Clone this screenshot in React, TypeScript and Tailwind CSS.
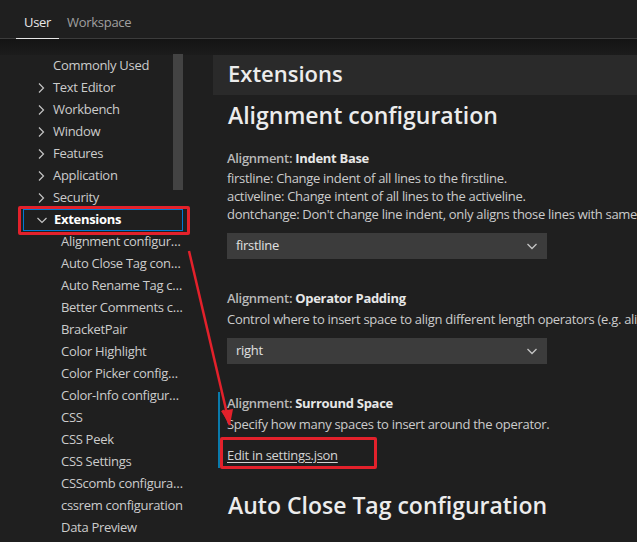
import React from 'react';

const topLevel = [
  { label: 'Commonly Used', chevron: false },
  { label: 'Text Editor', chevron: true },
  { label: 'Workbench', chevron: true },
  { label: 'Window', chevron: true },
  { label: 'Features', chevron: true },
  { label: 'Application', chevron: true },
  { label: 'Security', chevron: true },
];

const extensionItems = [
  'Alignment configur…',
  'Auto Close Tag con…',
  'Auto Rename Tag c…',
  'Better Comments c…',
  'BracketPair',
  'Color Highlight',
  'Color Picker config…',
  'Color-Info configur…',
  'CSS',
  'CSS Peek',
  'CSS Settings',
  'CSScomb configura…',
  'cssrem configuration',
  'Data Preview',
];

function Chevron({ down = false }: { down?: boolean }) {
  return (
    <svg width="16" height="16" viewBox="0 0 16 16" className="shrink-0">
      {down ? (
        <path d="M3.5 6l4.5 4.5L12.5 6" fill="none" stroke="#c5c5c5" strokeWidth="1.2" />
      ) : (
        <path d="M6 3.5l4.5 4.5L6 12.5" fill="none" stroke="#c5c5c5" strokeWidth="1.2" />
      )}
    </svg>
  );
}

function Dropdown({ value }: { value: string }) {
  return (
    <div className="flex items-center justify-between w-[320px] h-[26px] bg-[#3c3c3c] pl-[9px] pr-[7px] text-[13px] text-[#e0e0e0]">
      <span>{value}</span>
      <svg width="16" height="16" viewBox="0 0 16 16">
        <path d="M3.5 6l4.5 4.5L12.5 6" fill="none" stroke="#c5c5c5" strokeWidth="1.3" />
      </svg>
    </div>
  );
}

function SettingTitle({ name }: { name: string }) {
  return (
    <div className="text-[13px] leading-[18px] whitespace-nowrap">
      <span className="font-semibold text-[#b8b8b8]">Alignment: </span>
      <span className="font-bold text-[#e7e7e7]">{name}</span>
    </div>
  );
}

export default function App() {
  return (
    <div className="relative w-[637px] h-[542px] overflow-hidden bg-[#1f1f1f] text-[#cccccc] font-['Segoe_UI','Open_Sans',sans-serif] tracking-[-0.3px]">
      {/* tabs */}
      <div className="flex h-[39px] pl-[16px] border-b border-[#3c3c3c]">
        <div className="px-2 pt-[13px] text-[13px] text-[#e7e7e7] border-b border-[#e7e7e7] -mb-px">User</div>
        <div className="px-2 pt-[13px] text-[13px] text-[#a0a0a0]">Workspace</div>
      </div>
      <div className="h-[16px] bg-gradient-to-b from-[#141414] to-[#1c1c1c]" />

      <div className="flex">
        {/* tree */}
        <div className="w-[213px] shrink-0">
          <div className="relative w-[185px]">
            {topLevel.map((item) => (
              <div key={item.label} className="flex items-center h-[22px] pl-[33px] gap-[4px] text-[13px] whitespace-nowrap">
                {item.chevron ? <Chevron /> : <span className="w-[16px]" />}
                <span>{item.label}</span>
              </div>
            ))}
            <div className="flex items-center h-[22px] ml-[23px] w-[160px] pl-[10px] gap-[4px] text-[13px] font-bold text-[#ffffff] border border-[#0078d4]">
              <Chevron down />
              <span>Extensions</span>
            </div>
            {extensionItems.map((label) => (
              <div key={label} className="flex items-center h-[22px] pl-[61px] text-[13px] whitespace-nowrap">
                {label}
              </div>
            ))}
            <div className="absolute right-[2px] -top-px w-[10px] h-[136px] bg-[#434343]" />
          </div>
        </div>

        {/* content */}
        <div className="flex-1 min-w-0">
          <div className="h-[40px] bg-[#2a2a2a] pl-[15px] text-[22px] leading-[37px] font-semibold tracking-normal text-[#ececec] whitespace-nowrap">
            Extensions
          </div>
          <div className="pl-[5px]">
            <div className="mt-[5px] pl-[10px] text-[23px] leading-[30px] font-semibold tracking-normal text-[#ececec] whitespace-nowrap">
              Alignment configuration
            </div>

            <div className="mt-[19px] pl-[7px] border-l-2 border-transparent">
              <SettingTitle name="Indent Base" />
              <div className="mt-[2px] text-[13px] leading-[18px] whitespace-nowrap">
                <div>firstline: Change indent of all lines to the firstline.</div>
                <div>activeline: Change intent of all lines to the activeline.</div>
                <div>dontchange: Don't change line indent, only aligns those lines with same indent.</div>
              </div>
              <div className="mt-[10px]">
                <Dropdown value="firstline" />
              </div>
            </div>

            <div className="mt-[30px] pl-[7px] border-l-2 border-transparent">
              <SettingTitle name="Operator Padding" />
              <div className="mt-[3px] text-[13px] leading-[18px] whitespace-nowrap">
                Control where to insert space to align different length operators (e.g. aligning := and =).
              </div>
              <div className="mt-[10px]">
                <Dropdown value="right" />
              </div>
            </div>

            <div className="mt-[28px] pl-[7px] border-l-2 border-[#0a7aab] pt-[2px] pb-[4px]">
              <SettingTitle name="Surround Space" />
              <div className="mt-[3px] text-[13px] leading-[18px] whitespace-nowrap">
                Specify how many spaces to insert around the operator.
              </div>
              <div className="mt-[13px] text-[13px] leading-[18px] text-[#d4d4d4] underline underline-offset-2">
                Edit in settings.json
              </div>
            </div>

            <div className="mt-[22px] pl-[10px] text-[23px] leading-[30px] font-semibold tracking-normal text-[#ececec] whitespace-nowrap">
              Auto Close Tag configuration
            </div>
          </div>
        </div>
      </div>

      {/* annotations */}
      <div className="absolute left-[18px] top-[206px] w-[172px] h-[29px] border-[3px] border-[#e3212b] rounded-[2px] pointer-events-none" />
      <div className="absolute left-[220px] top-[437px] w-[157px] h-[32px] border-[3px] border-[#e3212b] rounded-[2px] pointer-events-none" />
      <svg className="absolute left-0 top-0 pointer-events-none" width="637" height="542" viewBox="0 0 637 542">
        <line x1="189" y1="251" x2="228" y2="418" stroke="#e3212b" strokeWidth="2.5" />
        <path d="M230 425 L221 411 L233 409 Z" fill="#e3212b" />
        <path d="M230 425 L223 410" stroke="#e3212b" strokeWidth="2.5" />
      </svg>
    </div>
  );
}
